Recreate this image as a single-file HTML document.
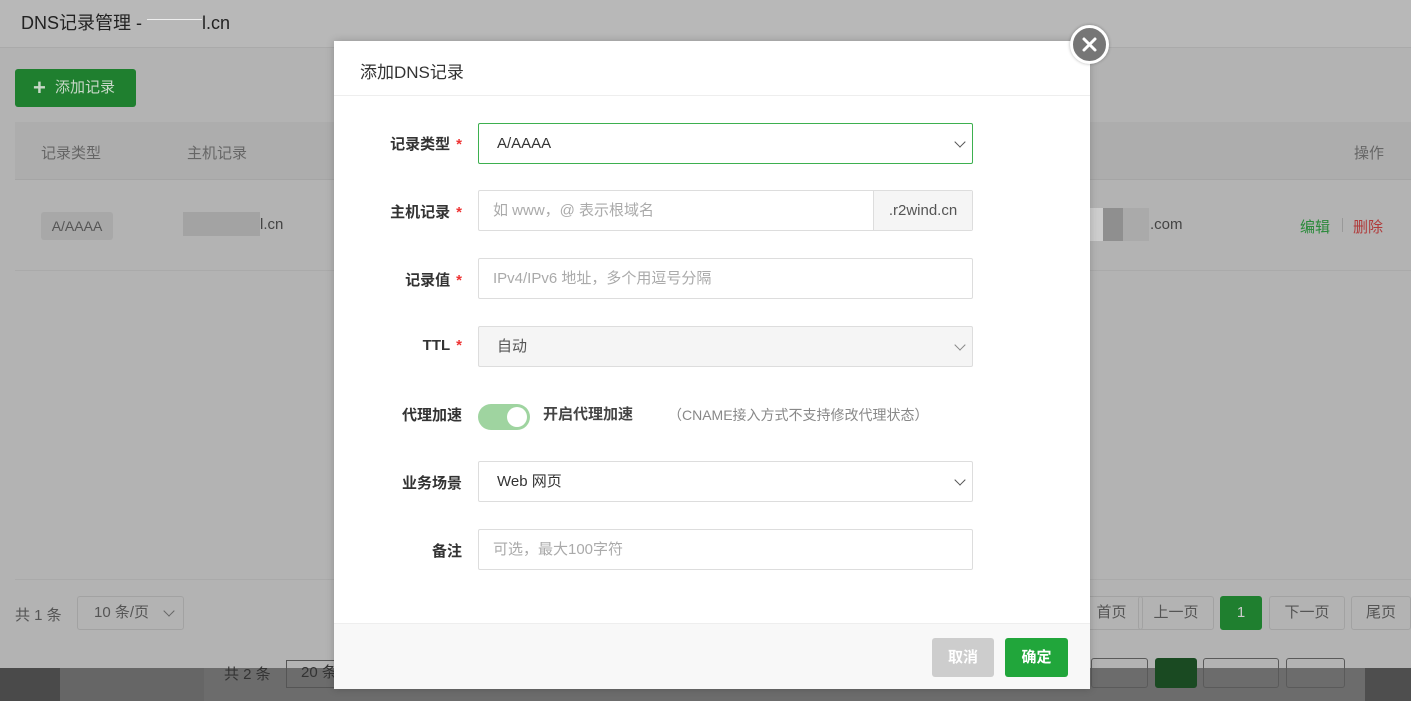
<!DOCTYPE html>
<html><head><meta charset="utf-8"><style>
*{box-sizing:border-box;margin:0;padding:0}
body{width:1411px;height:701px;overflow:hidden;position:relative;font-family:"Liberation Sans","Noto Sans CJK SC",sans-serif;background:#b3b3b3;color:#333}
.abs{position:absolute}
.hdr{left:0;top:0;width:1411px;height:48px;background:#b8b8b8;border-bottom:1px solid #aaa;font-size:18px;color:#222;padding:9px 0 0 21px}
.btnadd{left:15px;top:69px;width:121px;height:38px;background:#1f7f2f;border-radius:3px;font-size:15px;line-height:38px;padding-left:40px;color:#c8d8c8}
.thead{left:15px;top:122px;width:1396px;height:58px;background:#adadad;border-bottom:1px solid #a5a5a5;font-size:15px;color:#666}
.tag{left:41px;top:212px;width:72px;height:28px;background:#a8a8a8;border-radius:3px;font-size:14px;color:#555;line-height:28px;text-align:center}
.pg{height:34px;border:1px solid #a2a2a2;border-radius:3px;font-size:15px;color:#555;text-align:center;line-height:32px;top:596px}
.bot{left:0;top:668px;width:1411px;height:33px;background:#6c6c6c}
.modal{left:334px;top:41px;width:756px;height:648px;background:#fff;box-shadow:0 0 8px rgba(0,0,0,.2)}
.mh{left:0;top:0;width:756px;height:55px;border-bottom:1px solid #eee;background:#fff;font-size:17px;color:#333;padding:17px 0 0 26px}
.lbl{width:128px;text-align:right;font-size:15px;font-weight:bold;color:#333;left:0}
.star{color:#e33;margin-left:6px}
.inp{left:144px;width:495px;height:41px;border:1px solid #ddd;border-radius:2px;font-size:15px;line-height:39px;padding-left:14px;color:#aaa}
.chev{position:absolute;right:8px;top:14px;width:8px;height:8px;border-right:1.3px solid #555;border-bottom:1.3px solid #555;transform:rotate(45deg)}
.foot{left:0;top:582px;width:756px;height:66px;background:#f8f8f8;border-top:1px solid #eee}
.bp{top:-10px;height:30px;border:1px solid #5a5a5a;border-radius:3px}
</style></head><body>
<div class="abs hdr">DNS记录管理 - <span style="display:inline-block;width:55px;border-top:1px solid #eee;height:10px"></span>l.cn</div>
<div class="abs btnadd"><span style="position:absolute;left:18px;top:0;font-size:22px;font-weight:bold;color:#c8d8c8">+</span>添加记录</div>
<div class="abs thead"><span class="abs" style="left:26px;top:20px">记录类型</span><span class="abs" style="left:172px;top:20px">主机记录</span><span class="abs" style="left:1339px;top:20px">操作</span></div>
<div class="abs" style="left:15px;top:270px;width:1396px;border-top:1px solid #aaa"></div>
<div class="abs tag">A/AAAA</div>
<div class="abs" style="left:183px;top:212px;width:77px;height:24px;background:#a3a3a3"></div>
<div class="abs" style="left:260px;top:216px;font-size:15px;color:#444">l.cn</div>
<div class="abs" style="left:1083px;top:208px;width:66px;height:33px;background:linear-gradient(90deg,#cdcdcd 0 20px,#8f8f8f 20px 40px,#aaa 40px)"></div>
<div class="abs" style="left:1150px;top:216px;font-size:15px;color:#444">.com</div>
<div class="abs" style="left:1300px;top:216px;font-size:15px;color:#2a8a3a">编辑</div>
<div class="abs" style="left:1342px;top:218px;height:14px;border-left:1px solid #999"></div>
<div class="abs" style="left:1353px;top:216px;font-size:15px;color:#b03a3a">删除</div>
<div class="abs" style="left:15px;top:579px;width:1396px;border-top:1px solid #aaa"></div>
<div class="abs" style="left:15px;top:604px;font-size:15px;color:#555">共 1 条</div>
<div class="abs pg" style="left:77px;width:107px;text-align:left;padding-left:16px">10 条/页<span class="chev" style="right:10px;top:10px;border-color:#666"></span></div>
<div class="abs pg" style="left:1080px;width:63px">首页</div>
<div class="abs pg" style="left:1138px;width:76px">上一页</div>
<div class="abs pg" style="left:1220px;width:42px;background:#1f7f2f;border-color:#1f7f2f;color:#ccc">1</div>
<div class="abs pg" style="left:1269px;width:76px">下一页</div>
<div class="abs pg" style="left:1351px;width:60px">尾页</div>
<div class="abs bot"><div class="abs" style="left:0;top:0;width:60px;height:33px;background:#4a4a4a"></div>
<div class="abs" style="left:60px;top:0;width:144px;height:33px;background:#666"></div>
<div class="abs" style="left:224px;top:-5px;font-size:15px;color:#333">共 2 条</div>
<div class="abs" style="left:286px;top:-8px;width:60px;height:28px;border:1px solid #555;font-size:15px;color:#333;padding-left:14px">20 条</div>
<div class="abs bp" style="left:1091px;width:57px"></div>
<div class="abs bp" style="left:1155px;width:42px;background:#1a4a22;border-color:#1a4a22"></div>
<div class="abs bp" style="left:1203px;width:76px"></div>
<div class="abs bp" style="left:1286px;width:59px"></div>
<div class="abs" style="left:1365px;top:0;width:46px;height:33px;background:#4e4e4e"></div></div>
<div class="abs modal">
<div class="abs mh">添加DNS记录</div>
<div class="abs lbl" style="top:92px">记录类型<span class="star">*</span></div>
<div class="abs inp" style="top:82px;border-color:#3db04f;color:#333;padding-left:18px">A/AAAA<span class="chev"></span></div>
<div class="abs lbl" style="top:160px">主机记录<span class="star">*</span></div>
<div class="abs inp" style="top:149px">如 www，@ 表示根域名<span class="abs" style="right:0;top:0;width:99px;height:39px;background:#f5f5f5;border-left:1px solid #ddd;color:#555;text-align:center">.r2wind.cn</span></div>
<div class="abs lbl" style="top:228px">记录值<span class="star">*</span></div>
<div class="abs inp" style="top:217px">IPv4/IPv6 地址，多个用逗号分隔</div>
<div class="abs lbl" style="top:296px">TTL<span class="star">*</span></div>
<div class="abs inp" style="top:285px;background:#f5f5f5;color:#555;padding-left:18px">自动<span class="chev" style="border-color:#888"></span></div>
<div class="abs lbl" style="top:363px;width:128px">代理加速</div>
<div class="abs" style="left:144px;top:363px;width:52px;height:26px;border-radius:13px;background:#9fd4a0"><div class="abs" style="right:3px;top:3px;width:20px;height:20px;border-radius:50%;background:#fff"></div></div>
<div class="abs" style="left:209px;top:362px;font-size:15px;font-weight:bold;color:#444">开启代理加速</div>
<div class="abs" style="left:334px;top:364px;font-size:14px;color:#888">（CNAME接入方式不支持修改代理状态）</div>
<div class="abs lbl" style="top:431px">业务场景</div>
<div class="abs inp" style="top:420px;color:#333;padding-left:18px">Web 网页<span class="chev"></span></div>
<div class="abs lbl" style="top:499px">备注</div>
<div class="abs inp" style="top:488px">可选，最大100字符</div>
<div class="abs foot">
<div class="abs" style="left:598px;top:14px;width:62px;height:39px;background:#cdcdcd;border-radius:3px;color:#fff;font-size:15px;font-weight:bold;line-height:39px;text-align:center">取消</div>
<div class="abs" style="left:671px;top:14px;width:63px;height:39px;background:#21a63b;border-radius:3px;color:#fff;font-size:15px;font-weight:bold;line-height:39px;text-align:center">确定</div>
</div></div>
<div class="abs" style="left:1070px;top:25px;width:39px;height:39px;border-radius:50%;background:#767676;border:3px solid #fff;box-shadow:0 0 3px rgba(0,0,0,.3)">
<svg width="33" height="33" viewBox="0 0 33 33"><path d="M11 11L22 22M22 11L11 22" stroke="#fff" stroke-width="3" stroke-linecap="round"/></svg></div>
</body></html>
